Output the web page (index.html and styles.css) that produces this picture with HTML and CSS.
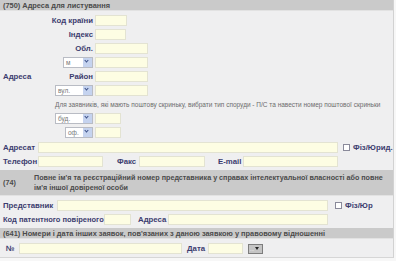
FILE: index.html
```html
<!DOCTYPE html>
<html lang="uk">
<head>
  <meta charset="UTF-8">
  <title>Адреса для листування</title>
  <link rel="stylesheet" href="styles.css">
</head>
<body>
  <div class="form">
    <!-- (750) адреса -->
    <div class="sect-head">(750) Адреса для листування</div>
    <div class="addr">
      <div class="addr-label">Адреса</div>
      <span class="lbl">Код країни</span><span class="inp w32"></span>
      <span class="lbl">Індекс</span><span class="inp w31"></span>
      <span class="lbl">Обл.</span><span class="inp w53"></span>
      <span class="sel w30"><span class="sel-text">м</span><span class="sel-btn"></span></span><span class="inp w53"></span>
      <span class="lbl">Район</span><span class="inp w53"></span>
      <span class="sel w38"><span class="sel-text">вул.</span><span class="sel-btn"></span></span><span class="inp w53"></span>
      <div class="note">Для заявників, які мають поштову скриньку, вибрати тип споруди - П/С та навести номер поштової скриньки</div>
      <span class="sel w38"><span class="sel-text">буд.</span><span class="sel-btn"></span></span><span class="inp w26"></span>
      <span class="sel w28"><span class="sel-text">оф.</span><span class="sel-btn"></span></span><span class="inp w26"></span>
    </div>
    <div class="rows">
      <div class="row">
        <span class="lbl first">Адресат</span><span class="inp w300"></span>
        <span class="check"></span><span class="lbl">Фіз/Юрид.</span>
      </div>
      <div class="row">
        <span class="lbl first">Телефон</span><span class="inp w65"></span>
        <span class="lbl fax">Факс</span><span class="inp w66"></span>
        <span class="lbl mail">E-mail</span><span class="inp w95"></span>
      </div>
    </div>

    <!-- (74) представник -->
    <div class="sect-head tall">
      <span class="sect-code">(74)</span>
      <span class="sect-text">Повне ім'я та реєстраційний номер представника у справах інтелектуальної власності або повне ім'я іншої довіреної особи</span>
    </div>
    <div class="rows">
      <div class="row">
        <span class="lbl rep">Представник</span><span class="inp w271"></span>
        <span class="check rep-check"></span><span class="lbl">Фіз/Юр</span>
      </div>
      <div class="row">
        <span class="lbl pat">Код патентного повіреного</span><span class="inp w27"></span>
        <span class="lbl adr">Адреса</span><span class="inp w160"></span>
      </div>
    </div>

    <!-- (641) інші заявки -->
    <div class="sect-head">(641) Номери і дата інших заявок, пов'язаних з даною заявкою у правовому відношенні</div>
    <div class="rows">
      <div class="row">
        <span class="lbl num">№</span><span class="inp w163"></span>
        <span class="lbl date">Дата</span><span class="inp w35"></span>
        <span class="cal"><span class="cal-dots">...</span><span class="cal-arrow"></span></span>
      </div>
    </div>
  </div>
</body>
</html>
```

FILE: styles.css
```css
body {
  margin: 0;
  background: #f7f7f7;
  font-family: 'Liberation Sans', Arial, sans-serif;
}
.form {
  width: 394px;
  height: 258px;
  background: #efeff0;
  border-right: 1px solid #d2d2d2;
  border-bottom: 1px solid #d6d6d6;
  box-sizing: border-box;
}
.sect-head {
  background: #cacaca;
  color: #4b4b4b;
  font-size: 7.4px;
  font-weight: bold;
  height: 11px;
  line-height: 11px;
  padding-left: 3px;
  border-bottom: 1px solid #e2e2e2;
  box-sizing: border-box;
  white-space: nowrap;
}
.sect-head.tall {
  height: 26px;
  display: grid;
  grid-template-columns: 31px 360px;
  align-items: center;
  line-height: 10px;
  font-size: 7.2px;
}
.sect-text {
  white-space: normal;
}
.lbl {
  color: #3c3c6e;
  font-size: 7.8px;
  font-weight: bold;
  line-height: 11px;
  white-space: nowrap;
  flex: none;
}
.inp {
  display: block;
  height: 11px;
  background: #fdfde3;
  border: 1px solid #e3e3d2;
  box-sizing: border-box;
  flex: none;
}
.w26 { width: 26px; }
.w27 { width: 27px; }
.w31 { width: 31px; }
.w32 { width: 32px; }
.w35 { width: 35px; }
.w53 { width: 53px; }
.w65 { width: 65px; }
.w66 { width: 66px; }
.w95 { width: 95px; }
.w160 { width: 160px; }
.w163 { width: 163px; }
.w271 { width: 271px; }
.w300 { width: 300px; }

.addr {
  display: grid;
  grid-template-columns: 48px 43px 1fr;
  grid-auto-rows: 11px;
  column-gap: 2px;
  row-gap: 3px;
  padding-top: 4px;
}
.addr-label {
  grid-column: 1;
  grid-row: 1 / span 9;
  align-self: center;
  padding-left: 3px;
  color: #3c3c6e;
  font-size: 7.8px;
  font-weight: bold;
}
.addr .lbl {
  grid-column: 2;
  text-align: right;
}
.addr .inp {
  grid-column: 3;
}
.addr .sel {
  grid-column: 2;
  justify-self: end;
}
.w28 { width: 28px; }
.w30 { width: 30px; }
.w38 { width: 38px; }
.sel {
  display: flex;
  height: 11px;
  background: #fff;
  border: 1px solid #b9bcc4;
  box-sizing: border-box;
}
.sel-text {
  flex: 1;
  color: #777;
  font-size: 6.5px;
  line-height: 9px;
  padding-left: 2px;
}
.sel-btn {
  width: 9px;
  background: #c5d3ef;
  position: relative;
}
.sel-btn::after {
  content: "";
  position: absolute;
  left: 2px;
  top: 1px;
  width: 2px;
  height: 2px;
  border-right: 1.5px solid #3a4f86;
  border-bottom: 1.5px solid #3a4f86;
  transform: rotate(45deg);
}
.note {
  grid-column: 2 / 4;
  color: #6d6d6d;
  font-size: 6.5px;
  line-height: 12px;
  white-space: nowrap;
  padding-left: 5px;
}

.rows {
  display: flex;
  flex-direction: column;
  gap: 3px;
  padding: 4px 0 3px 3px;
}
.row {
  display: flex;
  align-items: center;
  height: 11px;
}
.lbl.first {
  width: 35px;
}
.lbl.rep {
  width: 54px;
}
.lbl.pat {
  width: 101px;
  font-size: 7.5px;
}
.lbl.fax {
  margin-left: 14px;
  width: 22px;
}
.lbl.mail {
  margin-left: 13px;
  width: 25px;
}
.lbl.adr {
  margin-left: 7px;
  width: 30px;
}
.lbl.num {
  width: 16px;
  padding-left: 3px;
  box-sizing: border-box;
}
.lbl.date {
  margin-left: 5px;
  width: 21px;
}
.check {
  width: 7px;
  height: 7px;
  background: #fff;
  border: 1px solid #8a8a9a;
  box-sizing: border-box;
  margin: 0 3px 0 5px;
  flex: none;
}
.check.rep-check {
  margin-left: 7px;
}
.cal {
  display: flex;
  align-items: center;
  width: 15px;
  height: 10px;
  margin-left: 5px;
  background: #c4c4c4;
  border: 1px solid #7d7d7d;
  box-sizing: border-box;
}
.cal-dots {
  font-size: 5px;
  line-height: 8px;
  color: #fff;
  padding-left: 1px;
}
.cal-arrow {
  width: 0;
  height: 0;
  margin-left: 1px;
  border-left: 2px solid transparent;
  border-right: 2px solid transparent;
  border-top: 3px solid #222;
}
```
